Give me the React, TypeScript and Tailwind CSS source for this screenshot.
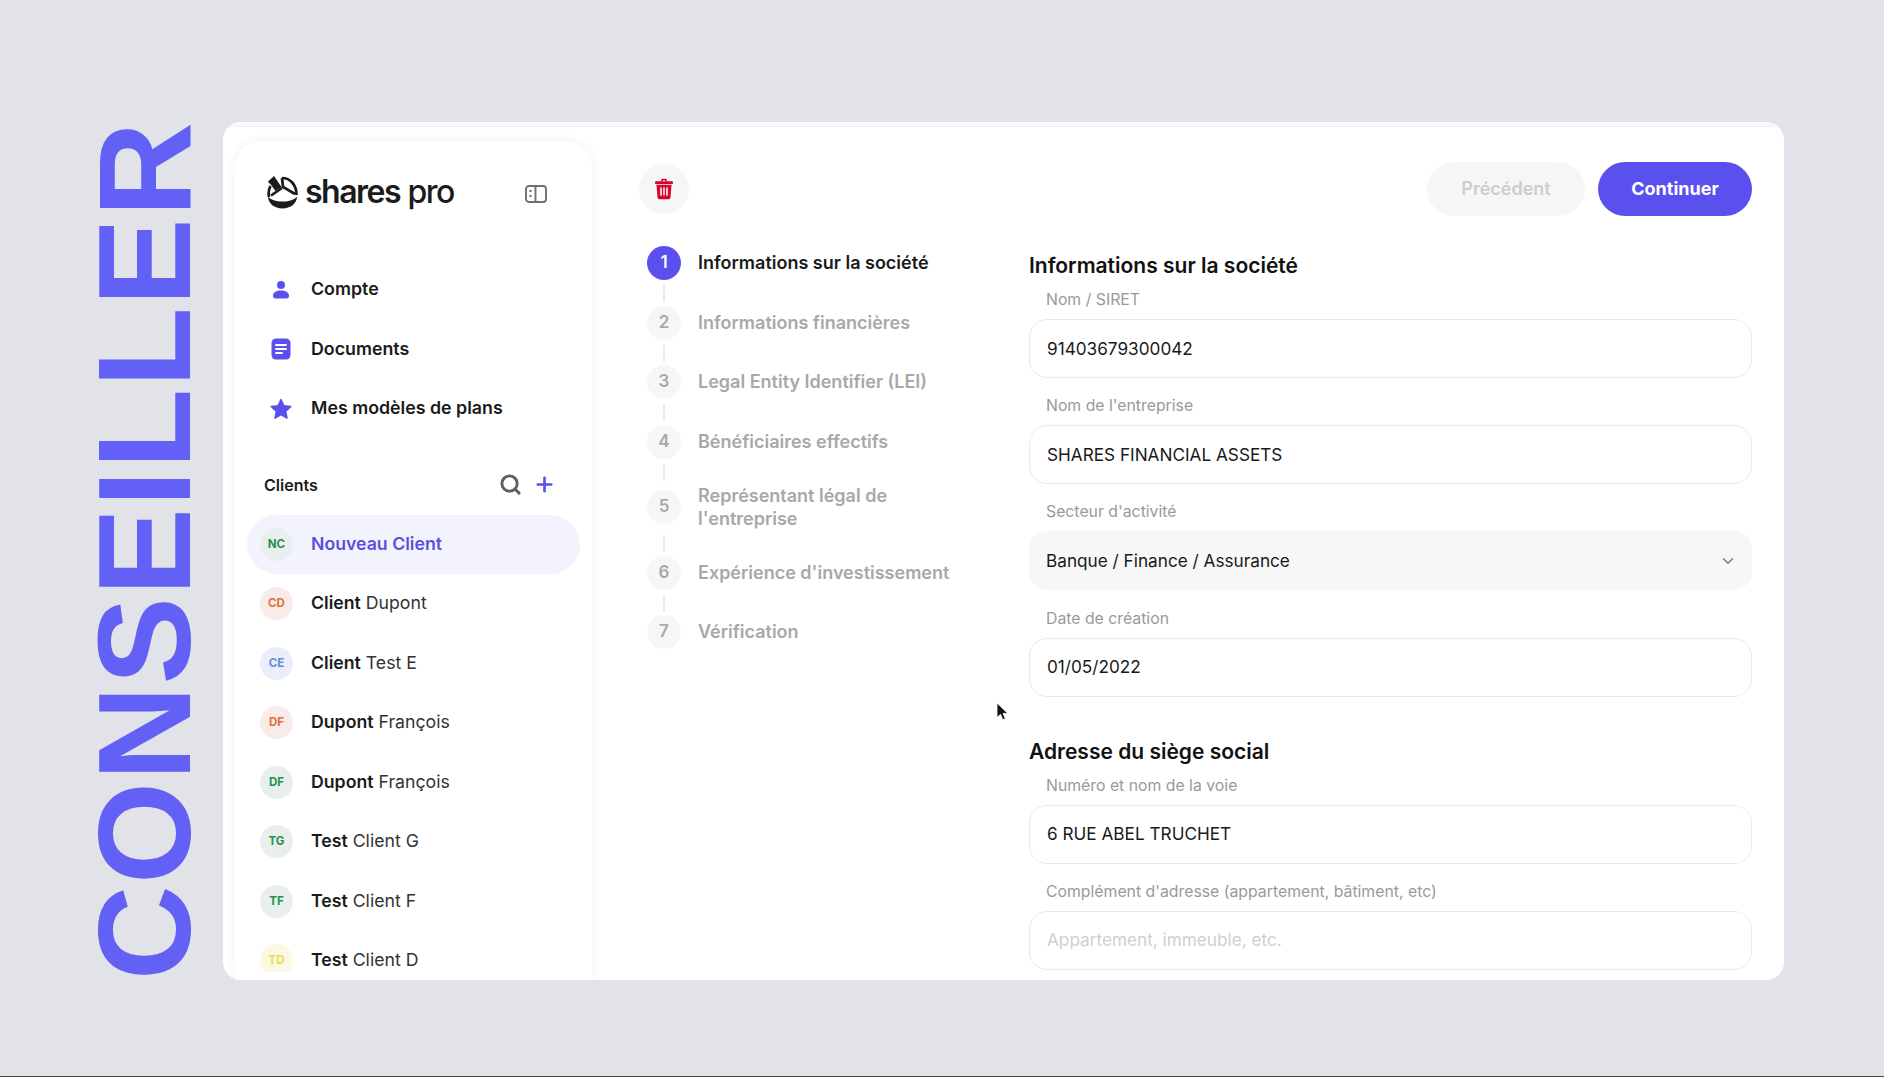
import { Search, Plus, ChevronDown } from "lucide-react";

const nav = [
  { label: "Compte", icon: <PersonIcon /> },
  { label: "Documents", icon: <DocIcon /> },
  { label: "Mes modèles de plans", icon: <StarIcon /> },
];

const clients = [
  { initials: "NC", bold: "Nouveau Client", rest: "", avatar: "bg-[#e9efec] text-[#23914f]", active: true },
  { initials: "CD", bold: "Client", rest: " Dupont", avatar: "bg-[#f9ebe7] text-[#e0703f]" },
  { initials: "CE", bold: "Client", rest: " Test E", avatar: "bg-[#e9eefa] text-[#5f8ddb]" },
  { initials: "DF", bold: "Dupont", rest: " François", avatar: "bg-[#f9ebe7] text-[#e0703f]" },
  { initials: "DF", bold: "Dupont", rest: " François", avatar: "bg-[#e9efec] text-[#23914f]" },
  { initials: "TG", bold: "Test", rest: " Client G", avatar: "bg-[#e9efec] text-[#23914f]" },
  { initials: "TF", bold: "Test", rest: " Client F", avatar: "bg-[#e9efec] text-[#23914f]" },
  { initials: "TD", bold: "Test", rest: " Client D", avatar: "bg-[#fbf9e4] text-[#ecd94f]" },
];

function PersonIcon() {
  return (
    <svg width="18" height="20" viewBox="0 0 18 20" fill="#5a50ee">
      <circle cx="9" cy="5" r="4" />
      <path d="M1 16c0-3.600 3.200-5.500 8-5.500s8 1.900 8 5.500c0 1.500-.9 2.500-2.500 2.500h-11C1.900 18.500 1 17.500 1 16z" />
    </svg>
  );
}

function DocIcon() {
  return (
    <svg width="20" height="22" viewBox="0 0 20 22">
      <rect x="0.500" y="0.500" width="19" height="21" rx="4.500" fill="#5a50ee" />
      <path d="M5 7h10M5 11h10M5 15h6" stroke="#fff" strokeWidth="1.800" strokeLinecap="round" />
    </svg>
  );
}

function StarIcon() {
  return (
    <svg width="24" height="24" viewBox="0 0 24 24" fill="#5a50ee" stroke="#5a50ee" strokeWidth="1.500" strokeLinejoin="round">
      <path d="M12 2.500l2.900 6.300 6.800.8-5 4.700 1.300 6.800-6-3.400-6 3.400 1.300-6.800-5-4.700 6.800-.8z" />
    </svg>
  );
}

function TrashIcon() {
  return (
    <svg width="20" height="22" viewBox="0 0 20 22" fill="#d4052d">
      <path d="M7 3.200V2.500C7 1.400 7.900.8 9 .8h2c1.100 0 2 .6 2 1.700v.7h-1.700v-.4c0-.3-.2-.5-.5-.5H9.200c-.3 0-.5.2-.5.5v.4z" />
      <rect x="1" y="3.200" width="18" height="3" rx="1.300" />
      <path d="M2.500 7h15l-1 12.500c-.1 1-.9 1.700-1.900 1.700H5.400c-1 0-1.800-.7-1.900-1.700z" />
      <path d="M7 10v7M10 10v7M13 10v7" stroke="#fff" strokeWidth="1.500" strokeLinecap="round" />
    </svg>
  );
}

function PanelIcon() {
  return (
    <svg width="22" height="18" viewBox="0 0 22 18" fill="none" stroke="#6f6f6f" strokeWidth="1.900">
      <rect x="1" y="1" width="20" height="16" rx="3" />
      <path d="M10.500 1v16" />
      <circle cx="5.500" cy="6" r="1.200" fill="#6f6f6f" stroke="none" />
      <circle cx="5.500" cy="11" r="1.200" fill="#6f6f6f" stroke="none" />
    </svg>
  );
}

function Logo() {
  return (
    <svg width="31" height="34" viewBox="0 0 31 34" fill="#1b1b1b">
      <path d="M1 21.500c2.500 3.500 8 5 14.500 5s12-1.500 14.500-5c0 7-6.500 12-14.500 12S1 28.500 1 21.500z" />
      <path d="M1 6.500L7 1l7.500 11-6 4z" />
      <path d="M3 9.500l6 8.500" stroke="#fff" strokeWidth="1.200" />
      <g fill="none" stroke="#1b1b1b" strokeWidth="2.700">
        <path d="M15 3c8.500 0 14.500 7 14.500 17" />
        <path d="M3.500 11C1.800 14 1.300 18 2 22" />
        <path d="M15 3l1 9 12 7" />
        <path d="M15 13L4 20.500" />
      </g>
    </svg>
  );
}

function Cursor() {
  return (
    <svg width="14" height="20" viewBox="0 0 14 20" fill="#111" stroke="#fff" strokeWidth="0.800">
      <path d="M1 1v14.500l3.500-3.200 2.300 5.400 2.500-1-2.300-5.300h4.800z" />
    </svg>
  );
}

function Field({ label, value, placeholder }: { label: string; value?: string; placeholder?: string }) {
  return (
    <div className="mb-[18.200px]">
      <div className="h-5 mb-[9px] pl-[17px] text-[15.800px] leading-5 text-[#9a9a9a]">{label}</div>
      <div className="h-[59px] flex items-center px-[17px] rounded-[18px] border border-[#e9e9f3] bg-white text-[17.200px]">
        {value ? <span className="text-[#1a1a1a]">{value}</span> : <span className="text-[#cfcfcf]">{placeholder}</span>}
      </div>
    </div>
  );
}

const steps = [
  "Informations sur la société",
  "Informations financières",
  "Legal Entity Identifier (LEI)",
  "Bénéficiaires effectifs",
  "Représentant légal de l'entreprise",
  "Expérience d'investissement",
  "Vérification",
];

export default function App() {
  return (
    <div className="h-[1077px] w-full overflow-hidden bg-[#e1e3e8] border-b border-[#444] flex items-start pl-[92px] pt-[122px] font-['Inter',sans-serif]">
      <div className="w-[131px] h-[858px] flex justify-start">
        <div className="[writing-mode:vertical-rl] rotate-180 h-[858px] w-[106px] text-center font-['Liberation_Sans',sans-serif] font-bold text-[131px] leading-[106px] tracking-[1.500px] text-[#6360f5] whitespace-nowrap">
          CONSEILLER
        </div>
      </div>

      <div className="relative w-[1561px] h-[858px] overflow-hidden rounded-[18px] bg-white flex">
        <div className="absolute top-0 inset-x-0 h-[5px] bg-[#f9f9fb] border-b border-[#f0f0f3]" />

        <aside className="relative ml-3 mt-[19px] w-[357px] h-[839px] shrink-0 rounded-t-[26px] bg-white shadow-[0_0_12px_rgba(30,30,60,0.06)]">
          <div className="pt-[34px] pl-[32px] pr-[45px] flex items-center justify-between h-[68px]">
            <div className="flex items-center gap-[7px]">
              <Logo />
              <div className="text-[32px] leading-[34px] tracking-[-1.500px] text-[#1b1b1b] whitespace-nowrap">
                <span className="font-semibold">shares</span> <span className="font-medium">pro</span>
              </div>
            </div>
            <div className="mt-[4px]"><PanelIcon /></div>
          </div>

          <nav className="mt-[51px] pl-[34px]">
            {nav.map((n) => (
              <div key={n.label} className="h-[59.500px] flex items-center">
                <div className="w-[24px] flex justify-center">{n.icon}</div>
                <span className="ml-[18px] text-[17.800px] font-semibold text-[#1a1a1a]">{n.label}</span>
              </div>
            ))}
          </nav>

          <div className="mt-[34px] h-6 pl-[29px] pr-[36px] flex items-center justify-between">
            <span className="text-[16px] font-semibold text-[#1a1a1a]">Clients</span>
            <div className="flex items-center gap-[11px]">
              <Search size={23} strokeWidth={3} className="text-[#5f5f5f]" />
              <Plus size={23} strokeWidth={2.800} className="text-[#5a50ee]" />
            </div>
          </div>

          <div className="mt-[18px] h-[457px] overflow-hidden px-3">
            {clients.map((c, i) => (
              <div
                key={i}
                className={`h-[59.500px] flex items-center pl-[13px] rounded-full ${c.active ? "bg-[#f3f3fd]" : ""}`}
              >
                <div className={`w-[33px] h-[33px] rounded-full shrink-0 flex items-center justify-center text-[11.500px] font-bold ${c.avatar}`}>
                  {c.initials}
                </div>
                <div className="ml-[18px] text-[17.700px] whitespace-pre">
                  <span className={`font-semibold ${c.active ? "text-[#5a50dd]" : "text-[#1a1a1a]"}`}>{c.bold}</span>
                  <span className="font-normal text-[#333]">{c.rest}</span>
                </div>
              </div>
            ))}
          </div>
        </aside>

        <main className="flex-1 min-w-0 pt-10 pl-[47px] pr-8">
          <div className="flex items-center justify-between h-[54px]">
            <div className="w-[50px] h-[50px] rounded-full bg-[#f6f6f6] flex items-center justify-center">
              <TrashIcon />
            </div>
            <div className="flex items-center gap-[13px]">
              <div className="w-[158px] h-[54px] pb-[2px] rounded-full bg-[#f6f6f6] flex items-center justify-center text-[18px] font-semibold text-[#cdcdcd]">
                Précédent
              </div>
              <div className="w-[154px] h-[54px] pb-[2px] rounded-full bg-[#5a50ee] flex items-center justify-center text-[18px] font-bold text-white">
                Continuer
              </div>
            </div>
          </div>

          <div className="mt-[30px] flex">
            <ol className="w-[390px] shrink-0 pl-2">
              {steps.map((s, i) => (
                <li key={s}>
                  <div className={`flex items-center ${i === 4 ? "h-[46px]" : "h-[34px]"}`}>
                    <div className={`w-[34px] h-[34px] rounded-full shrink-0 flex items-center justify-center text-[17px] font-semibold ${i === 0 ? "bg-[#5a50ee] text-white" : "bg-[#f6f6f6] text-[#a8a8a8]"}`}>
                      {i + 1}
                    </div>
                    <span className={`ml-[17px] w-[290px] text-[18px] leading-[23.500px] font-semibold ${i === 0 ? "text-[#1a1a1a]" : "text-[#a8a8a8]"} ${i === 4 ? "max-w-[240px]" : ""}`}>
                      {s}
                    </span>
                  </div>
                  {i < steps.length - 1 && <div className="ml-4 w-0.5 h-[17px] mt-[5px] mb-[3.500px] bg-[#e9e9e9]" />}
                </li>
              ))}
            </ol>

            <form className="flex-1 min-w-0 pt-[6px]">
              <h2 className="h-7 mb-[10px] text-[21px] leading-7 font-semibold text-[#111]">Informations sur la société</h2>
              <Field label="Nom / SIRET" value="91403679300042" />
              <Field label="Nom de l'entreprise" value="SHARES FINANCIAL ASSETS" />
              <div className="mb-[18.200px]">
                <div className="h-5 mb-[9px] pl-[17px] text-[15.800px] leading-5 text-[#9a9a9a]">Secteur d'activité</div>
                <div className="h-[59px] flex items-center justify-between pt-[1px] pl-[17px] pr-[15px] rounded-[18px] bg-[#f7f7f8] text-[17.200px] text-[#1a1a1a]">
                  <span>Banque / Finance / Assurance</span>
                  <ChevronDown size={18} className="text-[#777]" />
                </div>
              </div>
              <Field label="Date de création" value="01/05/2022" />
              <h2 className="h-7 mt-[41px] mb-[10px] text-[21px] leading-7 font-semibold text-[#111]">Adresse du siège social</h2>
              <Field label="Numéro et nom de la voie" value="6 RUE ABEL TRUCHET" />
              <Field label="Complément d'adresse (appartement, bâtiment, etc)" placeholder="Appartement, immeuble, etc." />
            </form>
          </div>
        </main>

        <div className="absolute left-[773px] top-[580px]"><Cursor /></div>
      </div>
    </div>
  );
}
